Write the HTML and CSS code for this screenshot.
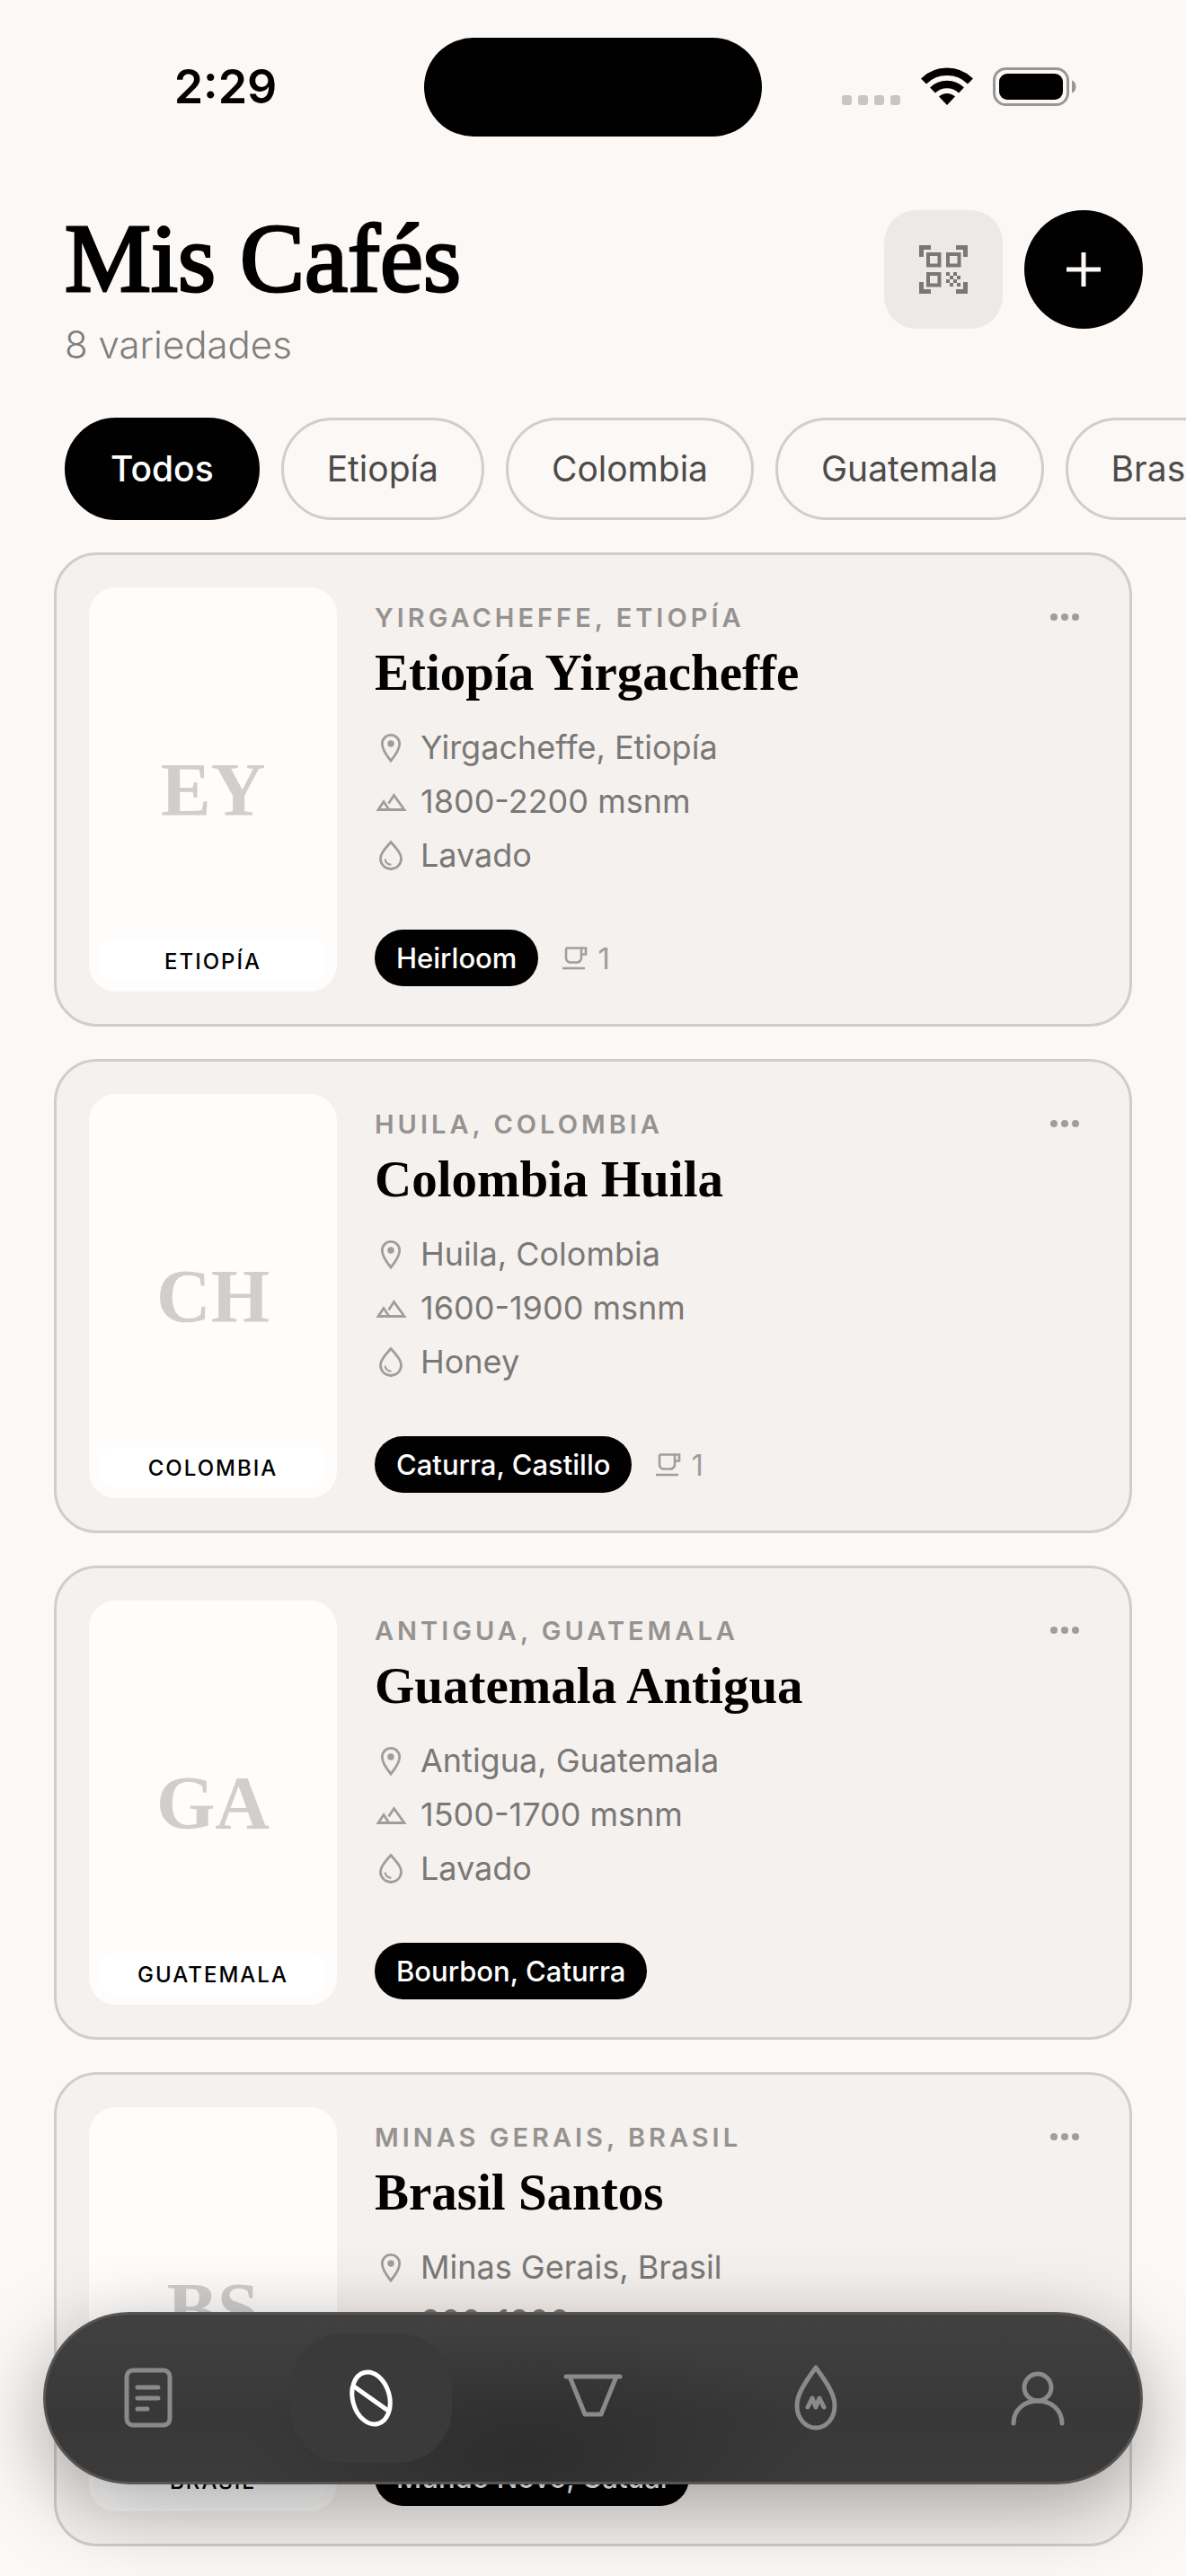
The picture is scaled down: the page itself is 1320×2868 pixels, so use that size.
FILE: index.html
```
<!DOCTYPE html>
<html lang="es">

<head>
    <meta charset="UTF-8">
    <meta name="viewport" content="width=device-width, initial-scale=1">
    <title>Mis Cafés</title>
    <link rel="stylesheet" href="styles.css">
</head>

<body>
    <!-- iconos compartidos -->
    <svg class="sprite" aria-hidden="true">
        <symbol id="pin" viewBox="0 0 36 36">
            <path d="M18 33C11.500 25 8.300 19.500 8.300 14a9.700 9.700 0 0 1 19.400 0C27.700 19.500 24.500 25 18 33Z" fill="none" stroke="currentColor" stroke-width="2.800" />
            <circle cx="18" cy="14" r="3.700" fill="currentColor" />
        </symbol>
        <symbol id="mountain" viewBox="0 0 36 36">
            <path d="M15.500 20.500 21.500 11.500 33 27.500H4L10 18.500l6 9" fill="none" stroke="currentColor" stroke-width="2.800" />
        </symbol>
        <symbol id="drop" viewBox="0 0 36 36">
            <path d="M18 3.500C10 12.500 6.500 17 6.500 22a11.500 11.500 0 0 0 23 0C29.500 17 26 12.500 18 3.500Z" fill="none" stroke="currentColor" stroke-width="2.800" />
            <path d="M11.500 22.500c.5 3.500 3 6 7 6.300" fill="none" stroke="currentColor" stroke-width="2" />
        </symbol>
        <symbol id="cup" viewBox="0 0 33 33">
            <path d="M7 5.500h22v7h-5M24 5.500v11a5 5 0 0 1-5 5h-7a5 5 0 0 1-5-5v-11M3 28h25" fill="none" stroke="currentColor" stroke-width="2.600" />
        </symbol>
        <symbol id="dots" viewBox="0 0 36 36">
            <circle cx="6" cy="18" r="4" fill="currentColor" />
            <circle cx="18" cy="18" r="4" fill="currentColor" />
            <circle cx="30" cy="18" r="4" fill="currentColor" />
        </symbol>
    </svg>

    <div class="status">
        <time class="clock">2:29</time>
        <div class="island"></div>
        <div class="signals">
            <svg width="66" height="44" viewBox="0 0 66 44" fill="#c9c5c3">
                <rect x="0" y="31" width="11" height="11" rx="3" />
                <rect x="18" y="31" width="11" height="11" rx="3" />
                <rect x="36" y="31" width="11" height="11" rx="3" />
                <rect x="54" y="31" width="11" height="11" rx="3" />
            </svg>
            <svg width="58" height="44" viewBox="0 0 58 44">
                <path d="M3 15.500a37 37 0 0 1 52 0M13 25.500a23 23 0 0 1 32 0" fill="none" stroke="#000" stroke-width="8.500" />
                <path d="M29 42l-9-9.500a13 13 0 0 1 18 0Z" />
            </svg>
            <svg width="94" height="44" viewBox="0 0 94 44">
                <rect x="1.500" y="1.500" width="82" height="40" rx="13" fill="none" stroke="#999795" stroke-width="3" />
                <rect x="7" y="7" width="71" height="29" rx="9" />
                <path d="M88 14.500c6 2 6 12 0 14Z" fill="#999795" />
            </svg>
        </div>
    </div>

    <header class="header">
        <div>
            <h1>Mis Cafés</h1>
            <p class="count">8 variedades</p>
        </div>
        <div class="actions">
            <button class="scan" type="button" aria-label="Escanear código">
                <svg width="56" height="56" viewBox="0 0 56 56" fill="none" stroke="currentColor">
                    <path d="M3.500 14V3.500H14M42 3.500h10.500V14M52.500 42v10.500H42M14 52.500H3.500V42" stroke-width="5" />
                    <path d="M11 11h12.500v12.500H11ZM33 11h12.500v12.500H33ZM11 33h12.500v12.500H11Z" stroke-width="4" />
                    <path d="M31 31h4v4h-4zM39 31h4v4h-4zM35 35h4v4h-4zM43 35h4v4h-4zM31 39h4v4h-4zM39 39h4v4h-4zM35 43h4v4h-4zM43 43h4v4h-4z" fill="currentColor" stroke="none" />
                </svg>
            </button>
            <button class="add" type="button" aria-label="Añadir café">
                <svg width="38" height="38" viewBox="0 0 38 38" fill="none" stroke="currentColor" stroke-width="5">
                    <path d="M19 0v38M0 19h38" />
                </svg>
            </button>
        </div>
    </header>

    <div class="filters">
        <button class="chip active" type="button">Todos</button>
        <button class="chip" type="button">Etiopía</button>
        <button class="chip" type="button">Colombia</button>
        <button class="chip" type="button">Guatemala</button>
        <button class="chip" type="button">Brasil</button>
    </div>

    <main class="list">
        <article class="card">
            <div class="cover">
                <span class="initials">EY</span>
                <span class="country">ETIOPÍA</span>
            </div>
            <div class="info">
                <div class="top">
                    <span class="region">YIRGACHEFFE, ETIOPÍA</span>
                    <button class="more" type="button" aria-label="Más opciones"><svg><use href="#dots" /></svg></button>
                </div>
                <h2>Etiopía Yirgacheffe</h2>
                <ul>
                    <li><svg><use href="#pin" /></svg>Yirgacheffe, Etiopía</li>
                    <li><svg><use href="#mountain" /></svg>1800-2200 msnm</li>
                    <li><svg><use href="#drop" /></svg>Lavado</li>
                </ul>
                <div class="bottom">
                    <span class="variety">Heirloom</span>
                    <span class="brews"><svg><use href="#cup" /></svg>1</span>
                </div>
            </div>
        </article>

        <article class="card">
            <div class="cover">
                <span class="initials">CH</span>
                <span class="country">COLOMBIA</span>
            </div>
            <div class="info">
                <div class="top">
                    <span class="region">HUILA, COLOMBIA</span>
                    <button class="more" type="button" aria-label="Más opciones"><svg><use href="#dots" /></svg></button>
                </div>
                <h2>Colombia Huila</h2>
                <ul>
                    <li><svg><use href="#pin" /></svg>Huila, Colombia</li>
                    <li><svg><use href="#mountain" /></svg>1600-1900 msnm</li>
                    <li><svg><use href="#drop" /></svg>Honey</li>
                </ul>
                <div class="bottom">
                    <span class="variety">Caturra, Castillo</span>
                    <span class="brews"><svg><use href="#cup" /></svg>1</span>
                </div>
            </div>
        </article>

        <article class="card">
            <div class="cover">
                <span class="initials">GA</span>
                <span class="country">GUATEMALA</span>
            </div>
            <div class="info">
                <div class="top">
                    <span class="region">ANTIGUA, GUATEMALA</span>
                    <button class="more" type="button" aria-label="Más opciones"><svg><use href="#dots" /></svg></button>
                </div>
                <h2>Guatemala Antigua</h2>
                <ul>
                    <li><svg><use href="#pin" /></svg>Antigua, Guatemala</li>
                    <li><svg><use href="#mountain" /></svg>1500-1700 msnm</li>
                    <li><svg><use href="#drop" /></svg>Lavado</li>
                </ul>
                <div class="bottom">
                    <span class="variety">Bourbon, Caturra</span>
                </div>
            </div>
        </article>

        <article class="card">
            <div class="cover">
                <span class="initials">BS</span>
                <span class="country">BRASIL</span>
            </div>
            <div class="info">
                <div class="top">
                    <span class="region">MINAS GERAIS, BRASIL</span>
                    <button class="more" type="button" aria-label="Más opciones"><svg><use href="#dots" /></svg></button>
                </div>
                <h2>Brasil Santos</h2>
                <ul>
                    <li><svg><use href="#pin" /></svg>Minas Gerais, Brasil</li>
                    <li><svg><use href="#mountain" /></svg>800-1200 msnm</li>
                    <li><svg><use href="#drop" /></svg>Natural</li>
                </ul>
                <div class="bottom">
                    <span class="variety">Mundo Novo, Catuaí</span>
                </div>
            </div>
        </article>
    </main>

    <nav class="tabs">
        <a class="tab" href="#" aria-label="Recetas">
            <svg viewBox="0 0 96 96">
                <rect x="24" y="17" width="48" height="61" rx="7" />
                <path d="M36 36h23M36 48h23M36 60h11" />
            </svg>
        </a>
        <a class="tab active" href="#" aria-label="Cafés">
            <svg viewBox="0 0 96 96">
                <ellipse cx="48" cy="48" rx="20.500" ry="29.500" transform="rotate(-15 48 48)" />
                <path d="M29 35 67 62" />
            </svg>
        </a>
        <a class="tab" href="#" aria-label="Métodos">
            <svg viewBox="0 0 96 96">
                <path d="M18 24h60M22 24 39 66h18L74 24" />
            </svg>
        </a>
        <a class="tab" href="#" aria-label="Agua">
            <svg viewBox="0 0 96 96">
                <path d="M48 14C34 33 27 45 27 56c0 14 9 25 21 25s21-11 21-25C69 45 62 33 48 14Z" />
                <path d="M39 58l5-10 4 10 4-10 5 10" />
            </svg>
        </a>
        <a class="tab" href="#" aria-label="Perfil">
            <svg viewBox="0 0 96 96">
                <circle cx="48" cy="36" r="15" />
                <path d="M21 76c0-14 11-25 27-25s27 11 27 25" />
            </svg>
        </a>
    </nav>
</body>

</html>
```
FILE: styles.css
```
* {
    padding: 0;
    margin: 0;
    box-sizing: border-box;
}

body {
    min-height: 100vh;
    background: #fcf8f5;
    color: #020102;
    font-family: Inter, "Liberation Sans", sans-serif;
    overflow-x: hidden;
}

button {
    border: none;
    background: none;
    font: inherit;
    color: inherit;
}

.sprite {
    display: none;
}

/* barra de estado */
.status {
    display: grid;
    grid-template-columns: 1fr 376px 1fr;
    align-items: center;
    padding-top: 42px;
}

.clock {
    padding-left: 30px;
    text-align: center;
    font-size: 52px;
    line-height: 110px;
    font-weight: 600;
}

.island {
    height: 110px;
    border-radius: 55px;
    background: #000;
}

.signals {
    display: flex;
    justify-content: center;
    gap: 22px;
    padding-right: 32px;
}

.header {
    display: flex;
    justify-content: space-between;
    padding: 82px 48px 0 72px;
}

h1 {
    font-family: "Liberation Serif", serif;
    font-size: 108px;
    line-height: 108px;
    font-weight: 400;
    -webkit-text-stroke: 3px #020102;
}

.count {
    margin-top: 12px;
    color: #7f7e7c;
    font-size: 42px;
    line-height: 60px;
    font-weight: 300;
}

.actions {
    display: flex;
    gap: 24px;
}

.actions button {
    display: flex;
    align-items: center;
    justify-content: center;
    width: 132px;
    height: 132px;
}

.scan {
    border-radius: 36px;
    background: #ece9e6;
    color: #7a7876;
}

.add {
    border-radius: 50%;
    background: #020102;
    color: #fcf8f5;
}

/* filtros por origen */
.filters {
    display: flex;
    gap: 24px;
    margin-top: 51px;
    padding-left: 72px;
    overflow: hidden;
}

.chip {
    flex-shrink: 0;
    height: 114px;
    padding: 0 48px 2px;
    border: 3px solid #d1cdca;
    border-radius: 57px;
    color: #4d4b4a;
    font-size: 39px;
}

.chip.active {
    border-color: #020102;
    background: #020102;
    color: #fff;
    font-weight: 500;
}

.list {
    display: flex;
    flex-direction: column;
    gap: 36px;
    padding: 36px 60px 32px;
}

.card {
    display: flex;
    gap: 42px;
    padding: 36px;
    border: 3px solid #d1cdca;
    border-radius: 48px;
    background: #f5f1ee;
}

.cover {
    position: relative;
    display: flex;
    align-items: center;
    justify-content: center;
    width: 276px;
    height: 450px;
    border-radius: 30px;
    background: #fefdfc;
}

.initials {
    color: #d0cfcd;
    font-family: "Liberation Serif", serif;
    font-size: 84px;
    font-weight: 700;
}

.country {
    position: absolute;
    left: 12px;
    right: 12px;
    bottom: 12px;
    padding-top: 3px;
    border-radius: 15px;
    background: #fff;
    text-align: center;
    font-size: 24px;
    line-height: 42px;
    font-weight: 500;
    letter-spacing: 2px;
}

.info {
    flex: 1;
    display: flex;
    flex-direction: column;
    padding: 6px 0;
}

.top {
    display: flex;
    align-items: center;
    justify-content: space-between;
    height: 54px;
}

.region {
    color: #959391;
    font-size: 29px;
    font-weight: 600;
    letter-spacing: 4px;
}

.more {
    width: 36px;
    height: 36px;
    margin-right: 18px;
    color: #a09e9c;
}

.more svg,
li svg {
    display: block;
    width: 36px;
    height: 36px;
}

h2 {
    font-family: "Liberation Serif", serif;
    font-size: 57px;
    line-height: 70px;
}

ul {
    display: flex;
    flex-direction: column;
    gap: 12px;
    margin-top: 24px;
    list-style: none;
}

li {
    display: flex;
    align-items: center;
    gap: 15px;
    color: #7a7876;
    font-size: 36px;
    line-height: 48px;
}

li svg {
    color: #a09e9c;
}

.bottom {
    display: flex;
    align-items: center;
    gap: 24px;
    margin-top: auto;
}

.variety {
    padding: 0 24px;
    border-radius: 32px;
    background: #020102;
    color: #fff;
    font-size: 31px;
    line-height: 63px;
    font-weight: 500;
}

.brews {
    display: flex;
    align-items: center;
    gap: 9px;
    color: #a09e9c;
    font-size: 33px;
}

.brews svg {
    width: 33px;
    height: 33px;
}

/* barra inferior flotante */
.tabs {
    position: fixed;
    left: 48px;
    right: 48px;
    bottom: 102px;
    display: flex;
    align-items: center;
    justify-content: space-between;
    height: 192px;
    padding: 0 24px;
    border: 3px solid #565554;
    border-radius: 96px;
    background:
        radial-gradient(ellipse 320px 140px at 44% 85%, rgba(38, 36, 36, 0.6), rgba(38, 36, 36, 0)),
        linear-gradient(#414141, #393838 60%, #3b3b3b);
    box-shadow: 0 24px 90px rgba(0, 0, 0, 0.35);
}

.tab {
    display: flex;
    align-items: center;
    justify-content: center;
    width: 180px;
    height: 144px;
    border-radius: 60px;
    color: #8a8a8a;
}

.tab.active {
    background: #3a3a3a;
    color: #fff;
}

.tab svg {
    width: 96px;
    height: 96px;
    fill: none;
    stroke: currentColor;
    stroke-width: 5;
    stroke-linecap: round;
    stroke-linejoin: round;
}
```
